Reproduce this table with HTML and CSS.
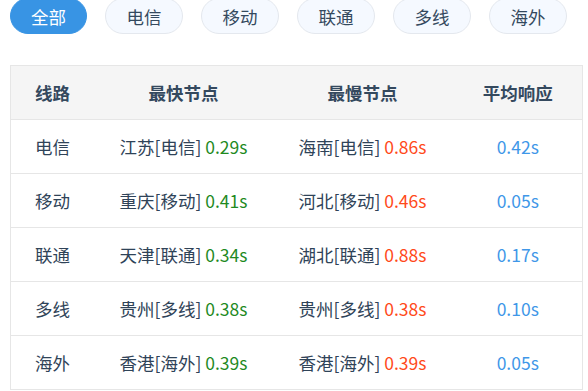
FILE: index.html
```html
<!DOCTYPE html>
<html lang="zh-CN">
<head>
<meta charset="utf-8">
<link rel="stylesheet" href="styles.css">
</head>
<body>
<div class="page">
  <div class="tabs">
    <span class="pill active">全部</span>
    <span class="pill">电信</span>
    <span class="pill">移动</span>
    <span class="pill">联通</span>
    <span class="pill">多线</span>
    <span class="pill">海外</span>
  </div>
  <table class="grid">
    <colgroup>
      <col class="c1"><col class="c2"><col class="c3"><col class="c4">
    </colgroup>
    <thead>
      <tr><th class="first">线路</th><th>最快节点</th><th>最慢节点</th><th>平均响应</th></tr>
    </thead>
    <tbody>
      <tr><td class="first">电信</td><td>江苏[电信] <span class="fast">0.29s</span></td><td>海南[电信] <span class="slow">0.86s</span></td><td class="avg">0.42s</td></tr>
      <tr><td class="first">移动</td><td>重庆[移动] <span class="fast">0.41s</span></td><td>河北[移动] <span class="slow">0.46s</span></td><td class="avg">0.05s</td></tr>
      <tr><td class="first">联通</td><td>天津[联通] <span class="fast">0.34s</span></td><td>湖北[联通] <span class="slow">0.88s</span></td><td class="avg">0.17s</td></tr>
      <tr><td class="first">多线</td><td>贵州[多线] <span class="fast">0.38s</span></td><td>贵州[多线] <span class="slow">0.38s</span></td><td class="avg">0.10s</td></tr>
      <tr><td class="first">海外</td><td>香港[海外] <span class="fast">0.39s</span></td><td>香港[海外] <span class="slow">0.39s</span></td><td class="avg">0.05s</td></tr>
    </tbody>
  </table>
</div>
</body>
</html>
```
FILE: styles.css
```css
html, body {
  margin: 0;
  padding: 0;
  background: #ffffff;
}
body {
  font-family: "Noto Sans CJK SC", "Noto Sans", sans-serif;
  font-size: 17.5px;
  color: #2f4358;
  overflow: hidden;
}
.page {
  padding: 0 6px 0 10px;
}
.tabs {
  display: flex;
  gap: 18px;
  margin-top: -2px;
}
.pill {
  box-sizing: border-box;
  height: 36px;
  width: 78px;
  border: 1px solid #e4e8ee;
  border-radius: 18px;
  background: #f5f9ff;
  color: #34495e;
  display: flex;
  align-items: center;
  justify-content: center;
  font-size: 17.5px;
}
.pill.active {
  background: #3894e4;
  border-color: #3894e4;
  color: #ffffff;
  width: 77px;
}
.grid {
  margin-top: 31px;
  width: 572px;
  border-collapse: collapse;
  table-layout: fixed;
  border: 1px solid #e6e6e6;
}
.c1 { width: 85px; }
.c2 { width: 176px; }
.c3 { width: 182px; }
.c4 { width: 129px; }
.grid th, .grid td {
  height: 53px;
  padding: 0;
  text-align: center;
  border-bottom: 1px solid #e6e6e6;
  white-space: nowrap;
}
.grid th {
  background: #f5f5f5;
  font-weight: bold;
  color: #34495e;
}
.grid .first {
  text-align: left;
  padding-left: 24px;
}
.fast { color: #1f8a1f; }
.slow { color: #ff4a1a; }
.avg { color: #3f97e8; }
```
